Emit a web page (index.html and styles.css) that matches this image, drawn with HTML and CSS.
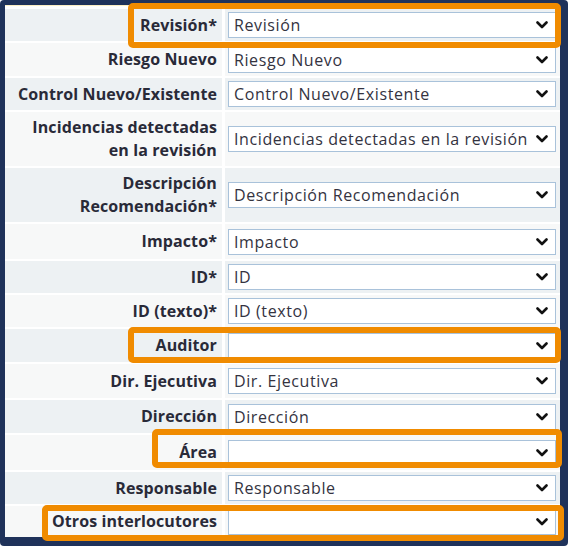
FILE: index.html
```html
<!DOCTYPE html>
<html lang="es">
<head>
<meta charset="utf-8">
<title>Formulario</title>
<link rel="stylesheet" href="styles.css">
</head>
<body>
<div class="frame">
  <div class="panel">
    <div class="row odd"><div class="label">Revisión*</div><div class="value"><div class="select"><span>Revisión</span><svg class="chev" viewBox="0 0 12 8"><path d="M1.5 1.5 L6 6 L10.5 1.5"/></svg></div></div></div>
    <div class="row even h33"><div class="label">Riesgo Nuevo</div><div class="value"><div class="select"><span>Riesgo Nuevo</span><svg class="chev" viewBox="0 0 12 8"><path d="M1.5 1.5 L6 6 L10.5 1.5"/></svg></div></div></div>
    <div class="row odd"><div class="label">Control Nuevo/Existente</div><div class="value"><div class="select"><span>Control Nuevo/Existente</span><svg class="chev" viewBox="0 0 12 8"><path d="M1.5 1.5 L6 6 L10.5 1.5"/></svg></div></div></div>
    <div class="row even tall"><div class="label">Incidencias detectadas<br>en la revisión</div><div class="value"><div class="select"><span>Incidencias detectadas en la revisión</span><svg class="chev" viewBox="0 0 12 8"><path d="M1.5 1.5 L6 6 L10.5 1.5"/></svg></div></div></div>
    <div class="row odd tall"><div class="label">Descripción<br>Recomendación*</div><div class="value"><div class="select"><span>Descripción Recomendación</span><svg class="chev" viewBox="0 0 12 8"><path d="M1.5 1.5 L6 6 L10.5 1.5"/></svg></div></div></div>
    <div class="row even h35"><div class="label">Impacto*</div><div class="value"><div class="select"><span>Impacto</span><svg class="chev" viewBox="0 0 12 8"><path d="M1.5 1.5 L6 6 L10.5 1.5"/></svg></div></div></div>
    <div class="row odd"><div class="label">ID*</div><div class="value"><div class="select"><span>ID</span><svg class="chev" viewBox="0 0 12 8"><path d="M1.5 1.5 L6 6 L10.5 1.5"/></svg></div></div></div>
    <div class="row even"><div class="label">ID (texto)*</div><div class="value"><div class="select"><span>ID (texto)</span><svg class="chev" viewBox="0 0 12 8"><path d="M1.5 1.5 L6 6 L10.5 1.5"/></svg></div></div></div>
    <div class="row odd h33"><div class="label">Auditor</div><div class="value"><div class="select"><span></span><svg class="chev" viewBox="0 0 12 8"><path d="M1.5 1.5 L6 6 L10.5 1.5"/></svg></div></div></div>
    <div class="row even h34"><div class="label">Dir. Ejecutiva</div><div class="value"><div class="select"><span>Dir. Ejecutiva</span><svg class="chev" viewBox="0 0 12 8"><path d="M1.5 1.5 L6 6 L10.5 1.5"/></svg></div></div></div>
    <div class="row odd h33"><div class="label">Dirección</div><div class="value"><div class="select"><span>Dirección</span><svg class="chev" viewBox="0 0 12 8"><path d="M1.5 1.5 L6 6 L10.5 1.5"/></svg></div></div></div>
    <div class="row even h35"><div class="label">Área</div><div class="value"><div class="select"><span></span><svg class="chev" viewBox="0 0 12 8"><path d="M1.5 1.5 L6 6 L10.5 1.5"/></svg></div></div></div>
    <div class="row odd"><div class="label">Responsable</div><div class="value"><div class="select"><span>Responsable</span><svg class="chev" viewBox="0 0 12 8"><path d="M1.5 1.5 L6 6 L10.5 1.5"/></svg></div></div></div>
    <div class="row even h31"><div class="label">Otros interlocutores</div><div class="value"><div class="select"><span></span><svg class="chev" viewBox="0 0 12 8"><path d="M1.5 1.5 L6 6 L10.5 1.5"/></svg></div></div></div>
  </div>
  <div class="hl hl-revision"></div>
  <div class="hl hl-auditor"></div>
  <div class="hl hl-area"></div>
  <div class="hl hl-otros"></div>
</div>
</body>
</html>
```

FILE: styles.css
```css
* { box-sizing: border-box; }

html, body {
  margin: 0;
  padding: 0;
  background: #ffffff;
}

.frame {
  position: relative;
  width: 568px;
  height: 546px;
  background: #1f325a;
  border-radius: 4px;
  padding: 5px 8px 9px 5px;
  font-family: "Open Sans", "Noto Sans", sans-serif;
}

.panel {
  height: 100%;
  background: #ffffff;
  border-top: 1px solid #fbeec4;
  padding-top: 3px;
  display: flex;
  flex-direction: column;
  gap: 2px;
}

.row {
  display: grid;
  grid-template-columns: 217px 1fr;
  column-gap: 3px;
  height: 32px;
  flex: none;
}

.row.h31 { height: 31px; }
.row.h33 { height: 33px; }
.row.h34 { height: 34px; }
.row.h35 { height: 35px; }
.row.tall { height: 54px; }

.row.odd > div { background: #edf1f3; }
.row.even > div { background: #f7f8f8; }

.label {
  display: flex;
  align-items: center;
  justify-content: flex-end;
  text-align: right;
  padding-right: 5px;
  font-weight: 700;
  font-size: 16px;
  letter-spacing: 0.1px;
  line-height: 23px;
  color: #292a38;
}

.value {
  display: flex;
  align-items: center;
  padding: 0 4px 0 3px;
}

.select {
  width: 100%;
  height: 26px;
  background: #ffffff;
  border: 1px solid #a9c2da;
  display: flex;
  align-items: center;
  justify-content: space-between;
  padding: 0 7px 0 5px;
  font-size: 16px;
  letter-spacing: 0.6px;
  color: #34333f;
  white-space: nowrap;
}

.chev {
  width: 12px;
  height: 8px;
  flex: none;
}

.chev path {
  fill: none;
  stroke: #111111;
  stroke-width: 2.6;
  stroke-linecap: round;
  stroke-linejoin: round;
}

.hl {
  position: absolute;
  border: 6px solid #f08b00;
  border-radius: 5px;
  pointer-events: none;
}

.hl-revision { left: 128px; top: 3px; width: 433px; height: 45px; }
.hl-auditor  { left: 128px; top: 327px; width: 433px; height: 36px; }
.hl-area     { left: 152px; top: 429px; width: 410px; height: 39px; }
.hl-otros    { left: 42px;  top: 505px; width: 522px; height: 36px; }
```
